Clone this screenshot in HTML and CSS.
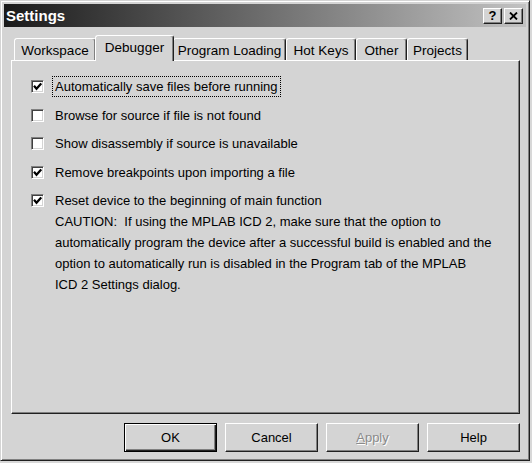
FILE: index.html
```html
<!DOCTYPE html>
<html>
<head>
<meta charset="utf-8">
<link rel="stylesheet" href="styles.css">
</head>
<body>
<div class="window">
  <div class="titlebar">
    <span class="title">Settings</span>
    <div class="tbtns">
      <span class="tbtn">?</span>
      <span class="tbtn"><svg width="9" height="8" viewBox="0 0 9 8"><path d="M1 0.5 L8 7.5 M8 0.5 L1 7.5" stroke="#000" stroke-width="1.8" fill="none"/></svg></span>
    </div>
  </div>
  <div class="content">
    <div class="tabs">
      <div class="tab w-ws">Workspace</div>
      <div class="tab active w-db">Debugger</div>
      <div class="tab w-pl">Program Loading</div>
      <div class="tab w-hk">Hot Keys</div>
      <div class="tab w-ot">Other</div>
      <div class="tab w-pr">Projects</div>
    </div>
    <div class="panel">
      <div class="opt">
        <span class="box"><svg width="9" height="9" viewBox="0 0 9 9"><path d="M1 3.8 L3.5 6.8 L8.2 1.4" stroke="#000" stroke-width="2.2" fill="none"/></svg></span>
        <span class="label focus">Automatically save files before running</span>
      </div>
      <div class="opt">
        <span class="box"></span>
        <span class="label">Browse for source if file is not found</span>
      </div>
      <div class="opt">
        <span class="box"></span>
        <span class="label">Show disassembly if source is unavailable</span>
      </div>
      <div class="opt">
        <span class="box"><svg width="9" height="9" viewBox="0 0 9 9"><path d="M1 3.8 L3.5 6.8 L8.2 1.4" stroke="#000" stroke-width="2.2" fill="none"/></svg></span>
        <span class="label">Remove breakpoints upon importing a file</span>
      </div>
      <div class="opt">
        <span class="box"><svg width="9" height="9" viewBox="0 0 9 9"><path d="M1 3.8 L3.5 6.8 L8.2 1.4" stroke="#000" stroke-width="2.2" fill="none"/></svg></span>
        <div class="textcol">
          <span class="label">Reset device to the beginning of main function</span>
          <div class="caution">CAUTION:&nbsp; If using the MPLAB ICD 2, make sure that the option to<br>automatically program the device after a successful build is enabled and the<br>option to automatically run is disabled in the Program tab of the MPLAB<br>ICD 2 Settings dialog.</div>
        </div>
      </div>
    </div>
    <div class="buttons">
      <div class="btn default">OK</div>
      <div class="btn">Cancel</div>
      <div class="btn disabled"><span class="u">A</span>pply</div>
      <div class="btn">Help</div>
    </div>
  </div>
</div>
</body>
</html>
```
FILE: styles.css
```css
html, body {
  margin: 0;
  background: #d8d8d8;
}
body {
  font-family: "Liberation Sans", Arial, sans-serif;
  font-size: 13px;
  color: #000;
}
.window {
  width: 530px;
  height: 461px;
  box-sizing: border-box;
  background: #d4d4d4;
  border: 1px solid;
  border-color: #d4d4d4 #202020 #202020 #d4d4d4;
  box-shadow: inset 1px 1px #fff, inset -1px -1px #808080;
  padding: 3px;
  display: flex;
  flex-direction: column;
}
.titlebar {
  height: 23px;
  flex: none;
  background: linear-gradient(to right, #1a1a1a, #c2c2c2);
  display: flex;
  align-items: center;
  padding: 0 3px 0 2px;
}
.title {
  color: #fff;
  font-weight: bold;
  font-size: 15px;
  flex: 1;
}
.tbtns {
  display: flex;
  gap: 2px;
}
.tbtn {
  width: 19px;
  height: 16px;
  box-sizing: border-box;
  background: #d4d4d4;
  border: 1px solid;
  border-color: #fff #202020 #202020 #fff;
  box-shadow: inset -1px -1px #808080;
  display: flex;
  align-items: center;
  justify-content: center;
  font-weight: bold;
  font-size: 13px;
  line-height: 1;
}
.content {
  flex: 1;
  padding: 8px 6px 0 7px;
  display: flex;
  flex-direction: column;
}
.tabs {
  display: flex;
  align-items: flex-end;
  height: 25px;
  padding-left: 3px;
  position: relative;
  z-index: 1;
  font-size: 13.5px;
}
.tab {
  height: 22px;
  box-sizing: border-box;
  border: 1px solid;
  border-bottom: none;
  border-color: #fff #202020 transparent #fff;
  box-shadow: inset -1px 0 #808080;
  border-radius: 3px 3px 0 0;
  display: flex;
  align-items: center;
  justify-content: center;
  padding-top: 1px;
  background: #d4d4d4;
}
.tab.active {
  height: 26px;
  margin: 0 -1px -1px -1px;
  padding-top: 0;
  padding-bottom: 2px;
  position: relative;
  z-index: 2;
}
.w-ws { width: 82px; }
.w-db { width: 79px; }
.w-pl { width: 113px; }
.w-hk { width: 70px; }
.w-ot { width: 51px; }
.w-pr { width: 61px; }
.panel {
  height: 354px;
  flex: none;
  box-sizing: border-box;
  border: 1px solid;
  border-color: #fff #202020 #202020 #fff;
  box-shadow: inset -1px -1px #808080;
  padding: 15px 0 0 19px;
}
.opt {
  display: flex;
  align-items: flex-start;
  line-height: 21px;
  margin-bottom: 7.5px;
}
.box {
  width: 13px;
  height: 13px;
  flex: none;
  box-sizing: border-box;
  margin-top: 4px;
  margin-right: 8px;
  background: #fff;
  border: 1px solid;
  border-color: #808080 #fff #fff #808080;
  box-shadow: inset 1px 1px #404040, inset -1px -1px #d4d4d4;
  display: flex;
  align-items: center;
  justify-content: center;
}
.box svg {
  display: block;
}
.label {
  display: block;
  line-height: 19px;
  padding: 0 2px;
  border: 1px dotted transparent;
  white-space: nowrap;
}
.label.focus {
  border-color: #000;
}
.textcol {
  display: flex;
  flex-direction: column;
  align-items: flex-start;
}
.caution {
  padding-left: 3px;
  line-height: 21px;
  white-space: nowrap;
}
.buttons {
  display: flex;
  justify-content: flex-end;
  gap: 8px;
  margin-top: 9px;
}
.btn {
  width: 93px;
  height: 29px;
  box-sizing: border-box;
  border: 1px solid;
  border-color: #fff #202020 #202020 #fff;
  box-shadow: inset -1px -1px #808080;
  display: flex;
  align-items: center;
  justify-content: center;
}
.btn.default {
  border-color: #000;
  box-shadow: inset 1px 1px #fff, inset -1px -1px #202020, inset -2px -2px #808080;
}
.btn.disabled {
  color: #8a8a8a;
  text-shadow: 1px 1px #fff;
}
.u {
  text-decoration: underline;
}
```
